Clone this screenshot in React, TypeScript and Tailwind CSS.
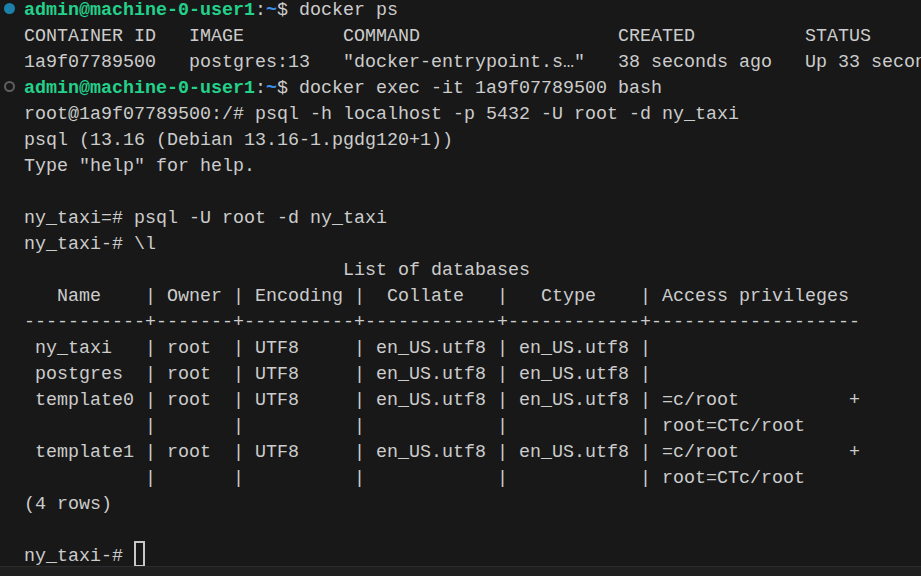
import React from "react";

type Seg = { t: string; c?: string };
type Line = { segs: Seg[]; mark?: "done" | "run"; cursor?: boolean };

const prompt = (cmd: string): Seg[] => [
  { t: "admin@machine-0-user1", c: "text-[#23d18b] font-bold" },
  { t: ":" },
  { t: "~", c: "text-[#3b8eea] font-bold" },
  { t: "$ " + cmd },
];

const plain = (t: string): Line => ({ segs: [{ t }] });

const lines: Line[] = [
  { segs: prompt("docker ps"), mark: "done" },
  plain("CONTAINER ID   IMAGE         COMMAND                  CREATED          STATUS          PORTS                    NAMES"),
  plain('1a9f07789500   postgres:13   "docker-entrypoint.s…"   38 seconds ago   Up 33 seconds   0.0.0.0:5432->5432/tcp   pg'),
  { segs: prompt("docker exec -it 1a9f07789500 bash"), mark: "run" },
  plain("root@1a9f07789500:/# psql -h localhost -p 5432 -U root -d ny_taxi"),
  plain("psql (13.16 (Debian 13.16-1.pgdg120+1))"),
  plain('Type "help" for help.'),
  plain(""),
  plain("ny_taxi=# psql -U root -d ny_taxi"),
  plain("ny_taxi-# \\l"),
  plain("                             List of databases"),
  plain("   Name    | Owner | Encoding |  Collate   |   Ctype    | Access privileges"),
  plain("-----------+-------+----------+------------+------------+-------------------"),
  plain(" ny_taxi   | root  | UTF8     | en_US.utf8 | en_US.utf8 |"),
  plain(" postgres  | root  | UTF8     | en_US.utf8 | en_US.utf8 |"),
  plain(" template0 | root  | UTF8     | en_US.utf8 | en_US.utf8 | =c/root          +"),
  plain("           |       |          |            |            | root=CTc/root"),
  plain(" template1 | root  | UTF8     | en_US.utf8 | en_US.utf8 | =c/root          +"),
  plain("           |       |          |            |            | root=CTc/root"),
  plain("(4 rows)"),
  plain(""),
  { segs: [{ t: "ny_taxi-# " }], cursor: true },
];

function Mark({ kind }: { kind?: "done" | "run" }) {
  if (kind === "done")
    return <span className="absolute left-[4px] top-[5px] w-[11px] h-[11px] rounded-full bg-[#1b81a8]" />;
  if (kind === "run")
    return (
      <span className="absolute left-[4px] top-[5px] w-[11px] h-[11px] rounded-full border-2 border-[#5f5f5f]" />
    );
  return null;
}

export default function App() {
  return (
    <div className="w-[921px] h-[576px] bg-[#181818] overflow-hidden flex flex-col">
      <div className="flex-1 overflow-hidden">
        <div
          className="mt-[-2px] text-[#cccccc] text-[18.33px] leading-[26px] whitespace-pre"
          style={{ fontFamily: '"Liberation Mono", "DejaVu Sans Mono", monospace' }}
        >
          {lines.map((ln, i) => (
            <div key={i} className="relative h-[26px] pl-6 flex">
              <Mark kind={ln.mark} />
              {ln.segs.map((s, j) => (
                <span key={j} className={s.c}>
                  {s.t}
                </span>
              ))}
              {ln.cursor && (
                <span className="relative top-[-3px] w-[11px] h-[26px] border-2 border-[#c8c8c8]" />
              )}
            </div>
          ))}
        </div>
      </div>
      <div className="h-[10px] shrink-0 border-t border-[#2b2b2b] bg-[#1f1f1f]" />
    </div>
  );
}
